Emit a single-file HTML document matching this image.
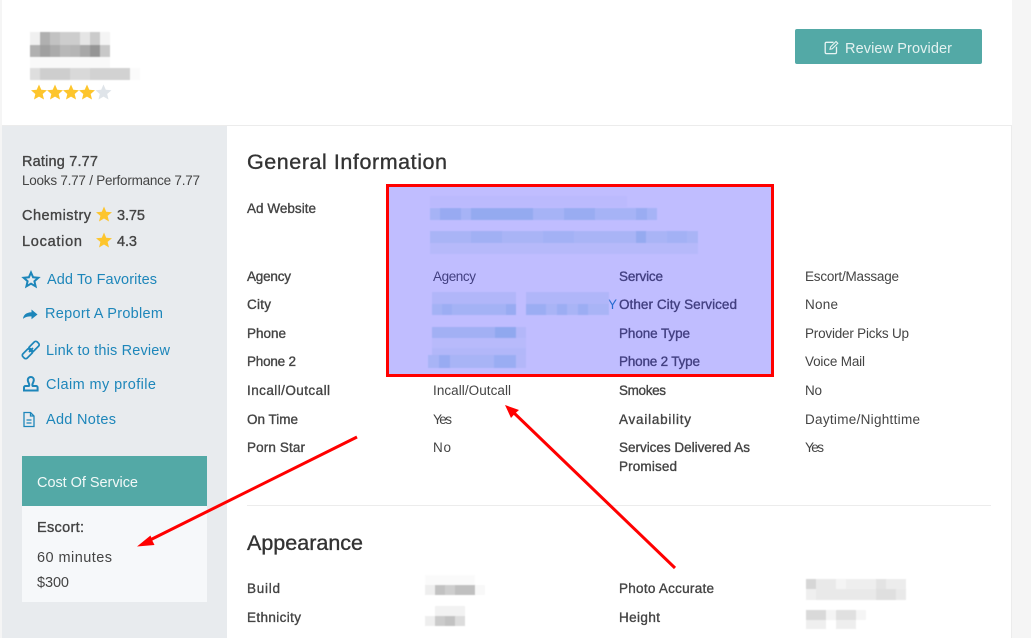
<!DOCTYPE html>
<html><head><meta charset="utf-8"><style>
html,body{margin:0;padding:0;background:#f5f5f5;width:1031px;height:638px;overflow:hidden}
svg{display:block}
text{font-family:"Liberation Sans",sans-serif;font-size:13.5px;fill:#444}
.s{stroke:#444;stroke-width:.35px}
.l{fill:#1d86ba;font-size:14.5px}
.h{font-size:21.5px;stroke:#333;stroke-width:.35px;fill:#333}
.m{font-size:14.5px}
.i{fill:none;stroke:#1d86ba;stroke-width:1.6}
</style></head><body>
<svg width="1031" height="638" viewBox="0 0 1031 638" xmlns="http://www.w3.org/2000/svg">
<defs><filter id="b" x="-5%" y="-5%" width="110%" height="110%"><feGaussianBlur stdDeviation=".45"/></filter></defs>
<rect x="2" y="0" width="1010" height="638" fill="#fff"/>
<rect x="2" y="125" width="1010" height="1" fill="#ececec"/>
<rect x="1011" y="125" width="1" height="513" fill="#ececec"/>
<rect x="2" y="126" width="225" height="512" fill="#e8ebee"/>

<!-- logo blur -->
<g filter="url(#b)">
<rect x="30" y="32" width="10" height="13" fill="#f0f0f0"/><rect x="40" y="32" width="10" height="13" fill="#b0b0b0"/><rect x="50" y="32" width="10" height="13" fill="#c2c2c2"/><rect x="60" y="32" width="20" height="13" fill="#cdcdcd"/><rect x="80" y="32" width="10" height="13" fill="#e5e5e5"/><rect x="90" y="32" width="10" height="13" fill="#cbcbcb"/><rect x="100" y="32" width="10" height="13" fill="#f4f4f4"/>
<rect x="30" y="45" width="10" height="12" fill="#b0b0b0"/><rect x="40" y="45" width="10" height="12" fill="#a0a0a0"/><rect x="50" y="45" width="10" height="12" fill="#ababab"/><rect x="60" y="45" width="10" height="12" fill="#b8b8b8"/><rect x="70" y="45" width="10" height="12" fill="#b5b5b5"/><rect x="80" y="45" width="10" height="12" fill="#a8a8a8"/><rect x="90" y="45" width="10" height="12" fill="#959595"/><rect x="100" y="45" width="10" height="12" fill="#c8c8c8"/>
<rect x="30" y="57" width="80" height="11" fill="#f9f9f9"/>
<rect x="30" y="68" width="10" height="12" fill="#dedede"/><rect x="40" y="68" width="30" height="12" fill="#cecece"/><rect x="70" y="68" width="20" height="12" fill="#d9d9d9"/><rect x="90" y="68" width="40" height="12" fill="#d2d2d2"/><rect x="130" y="68" width="10" height="12" fill="#fbfbfb"/>
</g>
<!-- rating stars -->
<g fill="#fdc52c">
<path d="M39 84.500l2.300 5.200 5.700.5-4.300 3.800 1.300 5.500-5-2.900-5 2.900 1.300-5.500-4.300-3.800 5.700-.5z"/>
<path d="M55 84.500l2.300 5.200 5.700.5-4.300 3.800 1.300 5.500-5-2.900-5 2.900 1.300-5.500-4.300-3.800 5.700-.5z"/>
<path d="M71 84.500l2.300 5.200 5.700.5-4.300 3.800 1.300 5.500-5-2.900-5 2.900 1.300-5.500-4.300-3.800 5.700-.5z"/>
<path d="M87 84.500l2.300 5.200 5.700.5-4.300 3.800 1.300 5.500-5-2.900-5 2.900 1.300-5.500-4.300-3.800 5.700-.5z"/>
<path fill="#dfe4e9" d="M103.500 84.500l2.300 5.200 5.700.5-4.300 3.800 1.300 5.500-5-2.900-5 2.900 1.300-5.500-4.300-3.800 5.700-.5z"/>
</g>

<!-- button -->
<rect x="795" y="29" width="187" height="35" rx="2" fill="#53a9a6"/>
<g fill="none" stroke="#e8f4f3" stroke-width="1.3" transform="translate(-.5 -1.2)">
<path d="M834 43.500h-7a1.300 1.300 0 0 0-1.300 1.300v8.700a1.300 1.300 0 0 0 1.300 1.300h8.700a1.300 1.300 0 0 0 1.300-1.300v-5.500"/>
<path d="M830.500 50.500l.5-2.300 5.500-5.500 1.800 1.800-5.500 5.500z" stroke-width="1.100"/>
</g>
<text x="845" y="53" textLength="107" style="fill:#e4f2f1;font-size:14.5px">Review Provider</text>

<!-- sidebar -->
<text x="22" y="166" textLength="76" class="s m">Rating 7.77</text>
<text x="22" y="185" textLength="178">Looks 7.77 / Performance 7.77</text>
<text x="22" y="220" textLength="69" class="s m">Chemistry</text>
<path fill="#fdc52c" d="M104 206.500l2.200 5.300 5.800.4-4.400 3.700 1.400 5.600-5-3-5 3 1.400-5.600-4.400-3.700 5.800-.4z"/>
<text x="117" y="220" textLength="28" class="s m">3.75</text>
<text x="22" y="246" textLength="60" class="s m">Location</text>
<path fill="#fdc52c" d="M104 232.500l2.200 5.300 5.800.4-4.400 3.700 1.400 5.600-5-3-5 3 1.400-5.600-4.400-3.700 5.800-.4z"/>
<text x="117" y="246" textLength="20" class="s m">4.3</text>

<path class="i" style="stroke-width:2" d="M31 272.500l2.100 4.800 5.200.5-3.900 3.400 1.200 5.100-4.600-2.700-4.600 2.700 1.200-5.100-3.900-3.400 5.200-.5z"/>
<text x="47" y="284" textLength="110" class="l">Add To Favorites</text>

<path fill="#1d86ba" d="M23 319c.3-4 3.200-6.500 8.500-6.700V309.500l6 5-6 4.800v-2.900c-3.500 0-6.500.6-8.500 2.600z"/>
<text x="45" y="318" textLength="118" class="l">Report A Problem</text>

<g class="i" style="stroke-width:1.700">
<rect x="-5.500" y="-3" width="11" height="6" rx="2" transform="translate(34 346.500) rotate(-45)"/>
<rect x="-5.500" y="-3" width="11" height="6" rx="2" transform="translate(27.500 353.500) rotate(-45)"/>
<path d="M29 352l4-4"/>
</g>
<text x="46" y="355" textLength="124" class="l">Link to this Review</text>

<path class="i" style="stroke-width:2" d="M24 390.500v-3a1.500 1.500 0 0 1 1.500-1.500h3c.8 0 .8-1 .6-2-.5-1.500-1.300-2.500-1.300-4a3 3 0 0 1 6 0c0 1.500-.8 2.500-1.300 4-.2 1-.2 2 .6 2h3a1.500 1.500 0 0 1 1.500 1.500v3z"/>
<text x="46" y="389" textLength="110" class="l">Claim my profile</text>

<g class="i" style="stroke-width:1.300"><path d="M24 412.500h6.500l3.500 3.500v10.500h-10z"/><path d="M30.500 412.500v3.500h3.500M26.500 420h5M26.500 423h5"/></g>
<text x="46" y="424" textLength="70" class="l">Add Notes</text>

<!-- cost box -->
<rect x="22" y="456" width="185" height="50" fill="#53a9a6"/>
<rect x="22" y="506" width="185" height="96" fill="#f6f8fa"/>
<text x="37" y="487" textLength="101" class="m" style="fill:#f2f9f8">Cost Of Service</text>
<text x="37" y="532" textLength="47" class="s m">Escort:</text>
<text x="37" y="562" textLength="75" class="m">60 minutes</text>
<text x="37" y="587" textLength="32" class="m">$300</text>

<!-- main -->
<text x="247" y="169" textLength="200" class="h">General Information</text>
<text x="247" y="213" textLength="69" class="s">Ad Website</text>

<text x="247" y="281" textLength="44" class="s">Agency</text>
<text x="433" y="281" textLength="43">Agency</text>
<text x="619" y="281" textLength="44" class="s">Service</text>
<text x="805" y="281" textLength="94">Escort/Massage</text>

<text x="247" y="309" textLength="24" class="s">City</text>
<text x="608" y="309" style="fill:#1d86ba">Y</text>
<text x="619" y="309" textLength="118" class="s">Other City Serviced</text>
<text x="805" y="309" textLength="33">None</text>

<text x="247" y="338" textLength="39" class="s">Phone</text>
<text x="619" y="338" textLength="71" class="s">Phone Type</text>
<text x="805" y="338" textLength="104">Provider Picks Up</text>

<text x="247" y="366" textLength="49" class="s">Phone 2</text>
<text x="619" y="366" textLength="81" class="s">Phone 2 Type</text>
<text x="805" y="366" textLength="60">Voice Mail</text>

<text x="247" y="395" textLength="83" class="s">Incall/Outcall</text>
<text x="433" y="395" textLength="78">Incall/Outcall</text>
<text x="619" y="395" textLength="47" class="s">Smokes</text>
<text x="805" y="395" textLength="17">No</text>

<text x="247" y="424" textLength="51" class="s">On Time</text>
<text x="433" y="424" textLength="19">Yes</text>
<text x="619" y="424" textLength="72" class="s">Availability</text>
<text x="805" y="424" textLength="115">Daytime/Nighttime</text>

<text x="247" y="452" textLength="58" class="s">Porn Star</text>
<text x="433" y="452" textLength="18">No</text>
<text x="619" y="452" textLength="131" class="s">Services Delivered As</text>
<text x="805" y="452" textLength="19">Yes</text>
<text x="619" y="471" textLength="58" class="s">Promised</text>

<rect x="247" y="505" width="744" height="1" fill="#ececec"/>
<text x="247" y="550" textLength="116" class="h">Appearance</text>

<text x="247" y="593" textLength="33" class="s">Build</text>
<text x="619" y="593" textLength="95" class="s">Photo Accurate</text>
<text x="247" y="622" textLength="54" class="s">Ethnicity</text>
<text x="619" y="622" textLength="41" class="s">Height</text>

<!-- bottom blurs -->
<g filter="url(#b)">
<rect x="425" y="575" width="50" height="10" fill="#fafafa"/>
<rect x="425" y="585" width="10" height="10" fill="#eee"/><rect x="435" y="585" width="10" height="10" fill="#c2c2c2"/><rect x="445" y="585" width="10" height="10" fill="#cecece"/><rect x="455" y="585" width="20" height="10" fill="#c0c0c0"/><rect x="475" y="585" width="10" height="10" fill="#f8f8f8"/>
<rect x="435" y="606" width="30" height="10" fill="#f2f2f2"/>
<rect x="425" y="616" width="10" height="10" fill="#eee"/><rect x="435" y="616" width="10" height="10" fill="#cbcbcb"/><rect x="445" y="616" width="10" height="10" fill="#c2c2c2"/><rect x="455" y="616" width="10" height="10" fill="#dcdcdc"/>
<rect x="806" y="579" width="10" height="10" fill="#d6d6d6"/><rect x="816" y="579" width="20" height="10" fill="#e9e9e9"/><rect x="836" y="579" width="10" height="10" fill="#f4f4f4"/><rect x="846" y="579" width="30" height="10" fill="#eeeeee"/><rect x="876" y="579" width="10" height="10" fill="#e3e3e3"/><rect x="886" y="579" width="20" height="10" fill="#ececec"/>
<rect x="806" y="589" width="10" height="11" fill="#efefef"/><rect x="816" y="589" width="60" height="11" fill="#e9e9e9"/><rect x="876" y="589" width="20" height="11" fill="#dfdfdf"/><rect x="896" y="589" width="10" height="11" fill="#e9e9e9"/>
<rect x="806" y="610" width="20" height="10" fill="#d9d9d9"/><rect x="826" y="610" width="10" height="10" fill="#f4f4f4"/><rect x="836" y="610" width="20" height="10" fill="#e0e0e0"/><rect x="856" y="610" width="10" height="10" fill="#f5f5f5"/>
<rect x="806" y="620" width="20" height="9" fill="#efefef"/><rect x="836" y="620" width="20" height="9" fill="#eeeeee"/>
</g>

<!-- overlay -->
<rect x="388" y="186" width="384" height="189" fill="#4037ff" fill-opacity=".33"/>

<!-- blue blurred data over overlay -->
<g filter="url(#b)">
<rect x="430" y="196" width="197" height="11" fill="#bbbafd"/>
<rect x="430" y="208" width="227" height="12" fill="#a6b3f6"/>
<rect x="440" y="208" width="21" height="12" fill="#98aaf2"/><rect x="471" y="208" width="62" height="12" fill="#94aaf0"/><rect x="564" y="208" width="31" height="12" fill="#99acf2"/><rect x="636" y="208" width="11" height="12" fill="#9aacf2"/>
<rect x="430" y="231" width="268" height="12" fill="#a9b4f6"/>
<rect x="471" y="231" width="31" height="12" fill="#a1b0f4"/><rect x="543" y="231" width="31" height="12" fill="#a3b1f5"/><rect x="636" y="231" width="10" height="12" fill="#95aaf0"/><rect x="667" y="231" width="20" height="12" fill="#a3b1f5"/>
<rect x="430" y="243" width="268" height="11" fill="#b6b9fa"/>
<rect x="432" y="292" width="84" height="12" fill="#b1b6f9"/><rect x="432" y="304" width="84" height="11" fill="#a4b2f5"/>
<rect x="506" y="304" width="10" height="11" fill="#98abf2"/><rect x="442" y="304" width="10" height="11" fill="#9cadf3"/>
<rect x="526" y="292" width="83" height="12" fill="#b0b6f9"/><rect x="526" y="304" width="83" height="11" fill="#a9b4f6"/>
<rect x="526" y="304" width="20" height="11" fill="#9badf3"/><rect x="557" y="304" width="10" height="11" fill="#9cadf3"/><rect x="578" y="304" width="10" height="11" fill="#9cadf3"/>
<rect x="432" y="327" width="84" height="11" fill="#a2b0f4"/><rect x="495" y="327" width="21" height="11" fill="#90a8ef"/><rect x="516" y="327" width="10" height="11" fill="#b3b7f9"/>
<rect x="432" y="338" width="94" height="10" fill="#b8baFB"/>
<rect x="432" y="348" width="94" height="7" fill="#b2b7f9"/>
<rect x="428" y="355" width="98" height="13" fill="#a8b4f6"/><rect x="439" y="355" width="11" height="13" fill="#98abf2"/><rect x="494" y="355" width="22" height="13" fill="#9aadf3"/><rect x="516" y="355" width="10" height="13" fill="#b3b7f9"/>
</g>

<!-- red box -->
<rect x="387.500" y="185.500" width="385" height="190" fill="none" stroke="#ff0000" stroke-width="3"/>

<!-- arrows -->
<path d="M357 437L146 542" stroke="#ff0000" stroke-width="3" fill="none"/>
<path d="M137 546.500l13.500-11 2 5.500 2 4z" fill="#ff0000"/>
<path d="M675 568L512 411" stroke="#ff0000" stroke-width="3" fill="none"/>
<path d="M505 405l14 5-4 3.500-4 4.500z" fill="#ff0000"/>
</svg>
</body></html>
